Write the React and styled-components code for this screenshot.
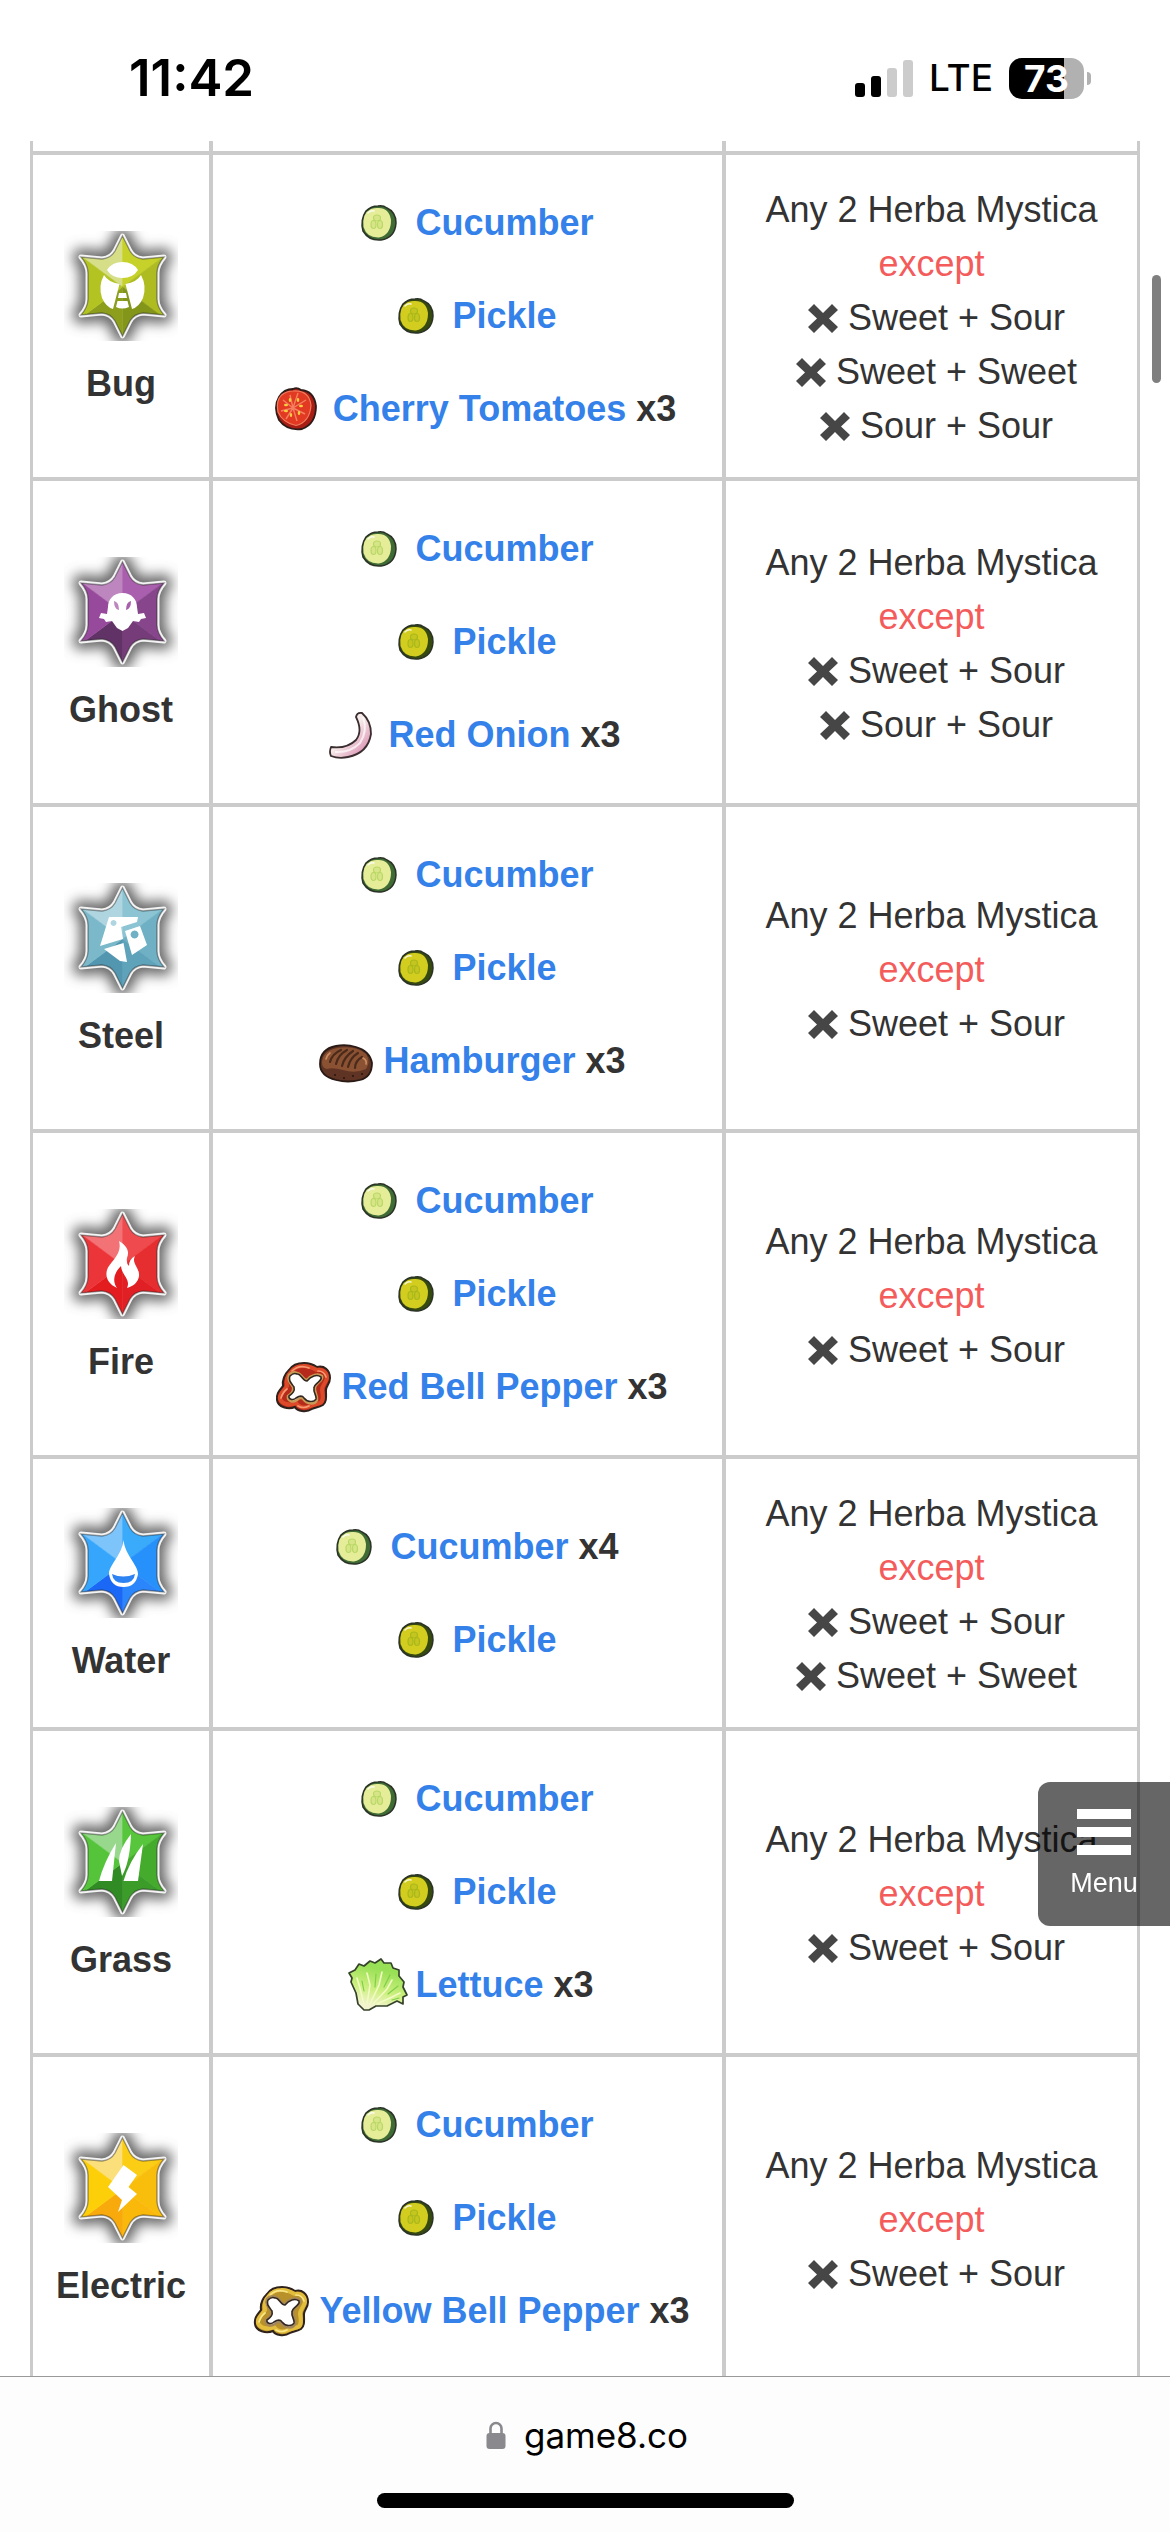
import React from "react";
import styled, { createGlobalStyle } from "styled-components";

const GlobalStyle = createGlobalStyle`
  *, *::before, *::after { box-sizing: border-box; }
  body {
    margin: 0;
    background: #fff;
    color: #333;
    font-family: "Liberation Sans", Helvetica, Arial, sans-serif;
    font-size: 36px;
    line-height: 54px;
  }
`;

const line = "#cbcbcb";
const systemFont = `Inter, "Liberation Sans", sans-serif`;

const Screen = styled.div`
  display: flex;
  flex-direction: column;
  height: 100vh;
  overflow: hidden;
`;

const StatusBar = styled.header`
  flex: none;
  display: flex;
  align-items: center;
  justify-content: space-between;
  padding: 48px 79px 33px 129px;
  font-family: ${systemFont};
  line-height: 60px;
  color: #000;
`;

const Clock = styled.time`
  font-size: 51px;
  font-weight: 600;
`;

const Indicators = styled.div`
  display: flex;
  align-items: center;
  gap: 16px;
`;

const Network = styled.span`
  font-size: 37px;
  font-weight: 500;
`;

const Battery = styled.div`
  display: flex;
  align-items: center;
  gap: 3px;
`;

const BatteryLevel = styled.div`
  width: 75px;
  height: 41px;
  border-radius: 13px;
  background: linear-gradient(to right, #000 ${(p) => p.$level}%, #b1b1b1 ${(p) => p.$level}%);
  color: #fff;
  font-size: 37px;
  font-weight: 700;
  line-height: 41px;
  text-align: center;
`;

const BatteryCap = styled.div`
  width: 4px;
  height: 13px;
  border-radius: 0 4px 4px 0;
  background: #b1b1b1;
`;

const Content = styled.main`
  flex: 1;
  min-height: 0;
  overflow: hidden;
  padding: 0 30px;
`;

const Table = styled.table`
  width: 100%;
  table-layout: fixed;
  border-collapse: separate;
  border-spacing: 0;
  border: solid ${line};
  border-width: 0 3px;
  text-align: center;
`;

const Col = styled.col`
  width: ${(p) => p.$width || "auto"};
`;

const Cell = styled.td`
  padding: ${(p) => p.$padding || "36px 0"};
  border-bottom: 4px solid ${line};
  border-right: 4px solid ${line};
  vertical-align: middle;
  &:last-child { border-right: 0; }
`;

const CutCell = styled(Cell)`
  height: 14px;
  padding: 0;
`;

const TypeCell = styled(Cell)`
  padding: 10px 0 0;
  font-weight: 700;
`;

const GemArt = styled.svg`
  display: block;
  width: 114px;
  height: 110px;
  margin: 0 auto 16px;
`;

const IngredientList = styled.ul`
  display: flex;
  flex-direction: column;
  gap: 29px;
  margin: 0;
  padding: 0;
  list-style: none;
`;

const Ingredient = styled.li`
  display: flex;
  align-items: center;
  justify-content: center;
  font-weight: 700;
  white-space: pre;
`;

const FoodArt = styled.svg`
  flex: none;
  width: 74px;
  height: 64px;
`;

const FoodLink = styled.a`
  color: #3581ea;
  text-decoration: none;
`;

const Rule = styled.div`
  display: flex;
  align-items: center;
  justify-content: center;
  gap: 10px;
  color: ${(p) => (p.$warn ? "#f45b5b" : "inherit")};
`;

const CrossArt = styled.svg`
  width: 40px;
  height: 30px;
`;

const ScrollThumb = styled.div`
  position: fixed;
  top: 275px;
  right: 9px;
  width: 9px;
  height: 108px;
  border-radius: 5px;
  background: #7f7f7f;
`;

const MenuButton = styled.button`
  position: fixed;
  right: 0;
  bottom: 606px;
  display: flex;
  flex-direction: column;
  align-items: center;
  gap: 8px;
  width: 132px;
  height: 144px;
  padding: 27px 0 0;
  border: 0;
  border-radius: 12px 0 0 12px;
  background: rgba(0, 0, 0, 0.6);
  color: #fff;
  font: 27px/40px "Liberation Sans", Helvetica, Arial, sans-serif;
`;

const Bars = styled.span`
  display: flex;
  flex-direction: column;
  gap: 8px;
`;

const Bar = styled.span`
  width: 54px;
  height: 10px;
  background: #fff;
`;

const Toolbar = styled.footer`
  flex: none;
  display: flex;
  flex-direction: column;
  align-items: center;
  padding-bottom: 24px;
  border-top: 1px solid #999;
  background: #fdfdfd;
`;

const Address = styled.button`
  display: flex;
  align-items: center;
  gap: 18px;
  height: 116px;
  padding: 0 0 0 4px;
  border: 0;
  background: none;
  color: #000;
  font: 35px/54px ${systemFont};
`;

const HomeIndicator = styled.div`
  width: 417px;
  height: 15px;
  border-radius: 8px;
  background: #000;
`;

/* ---------- type gems ---------- */

const STAR =
  "M58.5 5L66 20Q70 27 79 28L100 26Q93 34 93 42V68Q93 76 100 84L79 82Q70 83 66 90L58.5 105L51 90Q47 83 38 82L17 84Q24 76 24 68V42Q24 34 17 26L38 28Q47 27 51 20Z";

// Facets run clockwise from the upper left.
const gems = {
  Bug: {
    facets: ["#d6de88", "#c6d12a", "#aebc22", "#83961a", "#8c9e1c", "#b3c322"],
    mark: (
      <>
        <path d="M43 39Q48 31 58.5 31T74 39Q69 47 58.5 47T43 39Z" />
        <path d="M40 44Q34 55 38 67Q42 76 49 78L55.500 53Q44 51 40 44Z" />
        <path d="M77 44Q83 55 79 67Q75 76 68 78L61.500 53Q73 51 77 44Z" />
        <path d="M55 62h7l1 5h-9zM53.500 70h10l1.500 6q-7 3-13 0z" />
      </>
    ),
  },
  Ghost: {
    facets: ["#bd86bf", "#a95fad", "#87458c", "#763c7a", "#613265", "#974a9b"],
    mark: (
      <path
        fillRule="evenodd"
        d="M58.500 36C49 36 44 43 44 50L43 57L37 56L35 61L40 62L42 65L48 64L53 71L58.500 74L64 71L69 64L75 65L77 62L82 61L80 56L74 57L73 50C73 43 68 36 58.500 36ZM50 44Q55 45 55 53Q50 52 50 44ZM67 44Q62 45 62 53Q67 52 67 44Z"
      />
    ),
  },
  Steel: {
    facets: ["#aed5e0", "#8cc4d4", "#6fb0c5", "#5fa3ba", "#5296af", "#7ab8ca"],
    mark: (
      <>
        <path
          fillRule="evenodd"
          d="M45 34H74L73 39L57 44L59 56L36 63ZM49.500 37a3 3 0 1 0 .1 0Z"
        />
        <path
          fillRule="evenodd"
          d="M61 48L76 43L83 62L68 72ZM70.500 47.500a4 4 0 1 0 .1 0Z"
        />
        <path d="M40 66L59.500 60L63 79L56 78Z" />
      </>
    ),
  },
  Fire: {
    facets: ["#f27276", "#ef4a4d", "#e62d30", "#e02024", "#e31c1f", "#ec3539"],
    mark: (
      <path d="M55 32C65 38 65 44 63 49Q62 54 65 57Q65 50 71 47C67 54 76 59 75 67C74 74 69 77 63 79C67 70 58 67 57 57C54 60 46 69 53 79C44 75 41 68 43 61C45 53 59 46 55 32Z" />
    ),
  },
  Water: {
    facets: ["#7cc4fa", "#3aaafb", "#2691fb", "#2a86fa", "#1b68f7", "#36a6fc"],
    mark: (
      <>
        <path d="M59.500 32C61 47 74 57 74 66Q72 79 59.500 79T45 66C45 57 58 47 59.500 32Z" />
        <path fill="#2e83f2" d="M48 66Q59 71 71 66Q70 75 59.500 75T48 66Z" />
      </>
    ),
  },
  Grass: {
    facets: ["#97d88c", "#57c63c", "#45ab2d", "#3b9c29", "#318b24", "#55c43b"],
    mark: (
      <>
        <path d="M52 36Q40 55 35 74H48Z" />
        <path d="M67 27Q55 42 55 54L58 69Q66 55 67 27Z" />
        <path d="M79 37Q65 55 59.500 74H74Z" />
      </>
    ),
  },
  Electric: {
    facets: ["#fbdf7a", "#fbcd15", "#f9bd0c", "#fab80b", "#f8a90c", "#fccf08"],
    mark: (
      <path d="M59.500 32L73 42L64.500 54L73 61L54 79L58 67L44 54Z" />
    ),
  },
};

const facetShapes = [
  "M58.500 56V0H10V20Z",
  "M58.500 56V0H107V20Z",
  "M58.500 56L107 20V92Z",
  "M58.500 56L107 92V110H58.500Z",
  "M58.500 56V110H10V92Z",
  "M58.500 56L10 92V20Z",
];

function Gem({ type }) {
  const { facets, mark } = gems[type];
  const clip = `gem-${type}`;
  const blur = `glow-${type}`;
  return (
    <GemArt viewBox="0 0 114 110" aria-hidden="true">
      <defs>
        <clipPath id={clip}>
          <path d={STAR} />
        </clipPath>
        <filter id={blur} x="-40%" y="-40%" width="180%" height="180%">
          <feGaussianBlur stdDeviation="6.500" />
        </filter>
      </defs>
      <path d={STAR} fill="#666" stroke="#666" strokeWidth="17" strokeLinejoin="round" filter={`url(#${blur})`} />
      <path d={STAR} fill="#fff" stroke="#f4f4f4" strokeWidth="5" strokeLinejoin="round" />
      <g clipPath={`url(#${clip})`}>
        {facetShapes.map((d, i) => (
          <path key={d} d={d} fill={facets[i]} stroke={facets[i]} strokeWidth="0.5" />
        ))}
      </g>
      <path d={STAR} fill="none" stroke="#222" strokeOpacity="0.45" strokeWidth="1.300" />
      <g fill="#fff">{mark}</g>
    </GemArt>
  );
}

/* ---------- food drawings ---------- */

function Slice({ rind, flesh, seed }) {
  return (
    <g transform="translate(1 0)">
      <path d="M36 15Q41 14 45 17Q54 21 54 32Q53 47 39 49Q27 50 21 40Q18 29 24 20Q29 15 36 15Z" fill={rind} stroke="#2b3327" strokeWidth="1.500" />
      <path d="M35 17Q47 16 49 29Q49 44 37 46.500Q25 47 21.500 36Q20 22 29 18Q32 17 35 17Z" fill={flesh} />
      <g fill={seed} fillOpacity="0.350" stroke={seed} strokeWidth="1.200">
        <ellipse cx="35" cy="27" rx="3.500" ry="3" />
        <ellipse cx="31.500" cy="33.500" rx="2.500" ry="4" />
        <ellipse cx="38" cy="33.500" rx="2.500" ry="4" />
      </g>
      <path d="M26 22Q29 19 32 20" fill="none" stroke="#fff" strokeOpacity="0.800" strokeWidth="1.500" strokeLinecap="round" />
    </g>
  );
}

function Pepper({ skin, shade, light, inner }) {
  return (
    <>
      <path
        d="M37 8C44 8 47 10 50 12C57 10 63 15 63 23C63 29 59 31 59 35C59 41 60 47 56 50C51 53 48 52 45 54C39 58 30 56 28 52C21 55 11 52 10 45C9 38 13 35 16 31C15 24 18 19 22 15C26 9 31 8 37 8Z"
        fill={shade}
        stroke="#2f211c"
        strokeWidth="2"
      />
      <path
        d="M36 11C43 10 46 14 50 15C55 14 60 17 60 23C59 28 55 30 55 35C56 41 57 46 53 48C49 49 46 50 43 51C37 54 32 52 29 48C23 51 15 49 13 44C12 38 18 36 20 31C19 25 21 20 24 17C28 12 31 11 36 11Z"
        fill="none"
        stroke={skin}
        strokeWidth="4"
      />
      <path
        d="M25 16Q32 9 42 13M51 16Q57 16 59 22M14 43Q16 37 20 34M31 51Q36 54 42 51"
        fill="none"
        stroke={light}
        strokeWidth="1.700"
        strokeLinecap="round"
      />
      <path
        d="M30 18C34 17 35 25 40 25C44 20 51 18 55 21C57 26 48 28 48 33C47 37 51 41 50 45C48 50 40 49 37 45C35 42 32 43 30 45C26 48 20 46 21 41C25 38 27 36 26 32C23 28 20 24 22 20C25 17 28 17 30 18Z"
        fill="#fff"
        stroke={inner}
        strokeWidth="2.500"
      />
      <path
        d="M30 19C34 18 35 26 40 26C44 21 50 19 54 22C56 26 47 28 47 33C46 37 50 41 49 44C47 48 40 47 37 43C35 40 32 41 29 43C26 46 21 44 22 41C26 38 28 36 27 32C24 28 21 25 23 21C26 18 28 18 30 19Z"
        fill="#fff"
        stroke="#33281f"
        strokeWidth="1.600"
      />
    </>
  );
}

const foods = {
  Cucumber: <Slice rind="#3f6b35" flesh="#e6ed98" seed="#b9d868" />,
  Pickle: <Slice rind="#36490f" flesh="#d3cd1f" seed="#a9b81c" />,
  "Cherry Tomatoes": (
    <>
      <path d="M34 12Q38 10 42 13Q55 14 57 29Q57 47 43 52Q28 54 20 43Q14 30 20 20Q25 12 34 12Z" fill="#a81e14" stroke="#2e1c19" strokeWidth="1.800" />
      <path d="M34 14Q50 13 52 28Q51 45 37 48.500Q24 46 19 35Q16 19 28 15Q31 14 34 14Z" fill="#e23a22" stroke="#f07a5c" strokeWidth="1.200" />
      <path d="M34 31L39 16M34 31L47 23M34 31L46 37M34 31L38 44M34 31L27 42M34 31L22 34M34 31L24 23M34 31L31 18" stroke="#f4805f" strokeWidth="1.400" />
      <g fill="#f5cf3f">
        <ellipse cx="31" cy="23" rx="1.300" ry="2" />
        <ellipse cx="39" cy="23" rx="1.300" ry="2" />
        <ellipse cx="42" cy="29" rx="2" ry="1.200" />
        <ellipse cx="40" cy="36" rx="1.300" ry="2" />
        <ellipse cx="32" cy="38" rx="1.200" ry="2" />
        <ellipse cx="27" cy="34" rx="2" ry="1.200" />
        <ellipse cx="27" cy="28" rx="2" ry="1.200" />
      </g>
    </>
  ),
  "Red Onion": (
    <>
      <defs>
        <linearGradient id="onion" x1="0" y1="0" x2="1" y2="1">
          <stop offset="0.450" stopColor="#f7eceb" />
          <stop offset="0.800" stopColor="#dfa0bb" />
        </linearGradient>
      </defs>
      <path
        d="M42 14Q43 9 48 10Q57 18 57 31Q54 50 34 54Q25 56 17 53Q15 49 17 44Q33 46 42 37Q49 28 42 14Z"
        fill="url(#onion)"
        stroke="#3a2e30"
        strokeWidth="1.800"
        strokeLinejoin="round"
      />
      <path d="M49 14Q54 28 46 40Q36 50 21 49" fill="none" stroke="#fff" strokeWidth="2" strokeOpacity="0.700" />
    </>
  ),
  Hamburger: (
    <g transform="translate(1 0)">
      <path d="M10 35Q10 20 26 17Q36 15 46 18Q60 22 62 34Q62 48 50 51Q38 54 26 51Q10 47 10 35Z" fill="#5f3425" stroke="#2a1a15" strokeWidth="1.800" />
      <path d="M12 33Q13 22 27 19Q46 16 56 25Q61 33 56 40Q45 45 33 41Q22 38 17 40Q12 39 12 33Z" fill="#8a5232" />
      <path d="M20 33Q22 25 31 21M26 35Q28 26 37 21M32 37Q34 28 43 22M38 38Q40 29 48 24M45 39Q45 32 52 28" fill="none" stroke="#4a2a1b" strokeWidth="2.200" strokeLinecap="round" />
      <path d="M53 29Q57 31 56 35M16 30Q17 26 20 24" fill="none" stroke="#c98d63" strokeWidth="1.600" strokeLinecap="round" />
      <path d="M24 46h2M33 49h2M42 47h2M51 45h2" stroke="#341c14" strokeWidth="2" />
    </g>
  ),
  "Red Bell Pepper": <Pepper skin="#dc4a2a" shade="#b52a1a" light="#f59a72" inner="#c99a56" />,
  "Yellow Bell Pepper": <Pepper skin="#e3bd3c" shade="#b8912a" light="#f8e58a" inner="#a5875a" />,
  Lettuce: (
    <g transform="translate(1 0)">
      <defs>
        <linearGradient id="lettuce" x1="0.600" y1="0" x2="0.300" y2="1">
          <stop offset="0.200" stopColor="#98e055" />
          <stop offset="0.600" stopColor="#cdf07f" />
          <stop offset="0.900" stopColor="#f3f3cf" />
        </linearGradient>
      </defs>
      <path
        d="M22 57L16 51L14 40L9 29L10 25L7 20L13 17L17 11L22 13L28 8L33 10L39 6L42 10L49 10L51 15L57 17L57 23L62 29L61 34L65 42L61 44L61 51L55 48L45 53L34 53L27 57Z"
        fill="url(#lettuce)"
        stroke="#35432a"
        strokeWidth="1.700"
        strokeLinejoin="round"
      />
      <path d="M22 52L18 35L15 25M25 51L28 32L25 20M28 51L37 32L40 19M31 51L45 36L50 27M35 51L50 44L58 40" fill="none" stroke="#f2fbc4" strokeWidth="1.600" strokeLinecap="round" />
      <path d="M22 38L20 28M33 34L34 21M42 34L48 22M46 41L56 33M50 47L57 45" fill="none" stroke="#7fcf4b" strokeWidth="1.200" strokeLinecap="round" />
    </g>
  ),
};

/* ---------- data ---------- */

const recipes = [
  { type: "Bug", items: [["Cucumber"], ["Pickle"], ["Cherry Tomatoes", 3]], avoid: ["Sweet + Sour", "Sweet + Sweet", "Sour + Sour"] },
  { type: "Ghost", items: [["Cucumber"], ["Pickle"], ["Red Onion", 3]], avoid: ["Sweet + Sour", "Sour + Sour"] },
  { type: "Steel", items: [["Cucumber"], ["Pickle"], ["Hamburger", 3]], avoid: ["Sweet + Sour"] },
  { type: "Fire", items: [["Cucumber"], ["Pickle"], ["Red Bell Pepper", 3]], avoid: ["Sweet + Sour"] },
  { type: "Water", items: [["Cucumber", 4], ["Pickle"]], avoid: ["Sweet + Sour", "Sweet + Sweet"] },
  { type: "Grass", items: [["Cucumber"], ["Pickle"], ["Lettuce", 3]], avoid: ["Sweet + Sour"] },
  { type: "Electric", items: [["Cucumber"], ["Pickle"], ["Yellow Bell Pepper", 3]], avoid: ["Sweet + Sour"] },
];

function Cross() {
  return (
    <CrossArt viewBox="0 0 40 30" aria-hidden="true">
      <path
        fill="#464646"
        d="M16 1L25 10L34 1L40 7L31 15.500L40 24L34 30L25 21L16 30L10 24L19 15.500L10 7Z"
      />
    </CrossArt>
  );
}

function RecipeRow({ type, items, avoid }) {
  return (
    <tr>
      <TypeCell as="th" scope="row">
        <Gem type={type} />
        {type}
      </TypeCell>
      <Cell>
        <IngredientList>
          {items.map(([name, count]) => (
            <Ingredient key={name}>
              <FoodArt viewBox="0 0 74 64" aria-hidden="true">{foods[name]}</FoodArt>
              <FoodLink href="#">{name}</FoodLink>
              {count ? ` x${count}` : null}
            </Ingredient>
          ))}
        </IngredientList>
      </Cell>
      <Cell $padding="28px 0 24px">
        <Rule>Any 2 Herba Mystica</Rule>
        <Rule $warn>except</Rule>
        {avoid.map((pair) => (
          <Rule key={pair}>
            <Cross />
            {pair}
          </Rule>
        ))}
      </Cell>
    </tr>
  );
}

export default function App() {
  return (
    <Screen>
      <GlobalStyle />
      <StatusBar>
        <Clock>11:42</Clock>
        <Indicators>
          <svg width="58" height="38" viewBox="0 0 58 38" aria-hidden="true">
            <rect x="0" y="24" width="10" height="14" rx="3" />
            <rect x="16" y="17" width="10" height="21" rx="3" />
            <rect x="32" y="9" width="10" height="29" rx="3" fill="#ccc" />
            <rect x="48" y="1" width="10" height="37" rx="3" fill="#ccc" />
          </svg>
          <Network>LTE</Network>
          <Battery>
            <BatteryLevel $level={73}>73</BatteryLevel>
            <BatteryCap />
          </Battery>
        </Indicators>
      </StatusBar>

      <Content>
        <Table aria-label="Sandwich recipes by type">
          <colgroup>
            <Col $width="180px" />
            <Col />
            <Col $width="411px" />
          </colgroup>
          <tbody>
            <tr>
              <CutCell />
              <CutCell />
              <CutCell />
            </tr>
            {recipes.map((recipe) => (
              <RecipeRow key={recipe.type} {...recipe} />
            ))}
          </tbody>
        </Table>
      </Content>

      <ScrollThumb />
      <MenuButton type="button">
        <Bars>
          <Bar />
          <Bar />
          <Bar />
        </Bars>
        Menu
      </MenuButton>

      <Toolbar>
        <Address type="button">
          <svg width="20" height="28" viewBox="0 0 20 28" aria-hidden="true">
            <path d="M4.500 13V7.500a5.500 5.500 0 0 1 11 0V13" fill="none" stroke="#8a898e" strokeWidth="2.600" />
            <rect x="0.500" y="12" width="19" height="16" rx="3" fill="#8a898e" />
          </svg>
          game8.co
        </Address>
        <HomeIndicator />
      </Toolbar>
    </Screen>
  );
}
